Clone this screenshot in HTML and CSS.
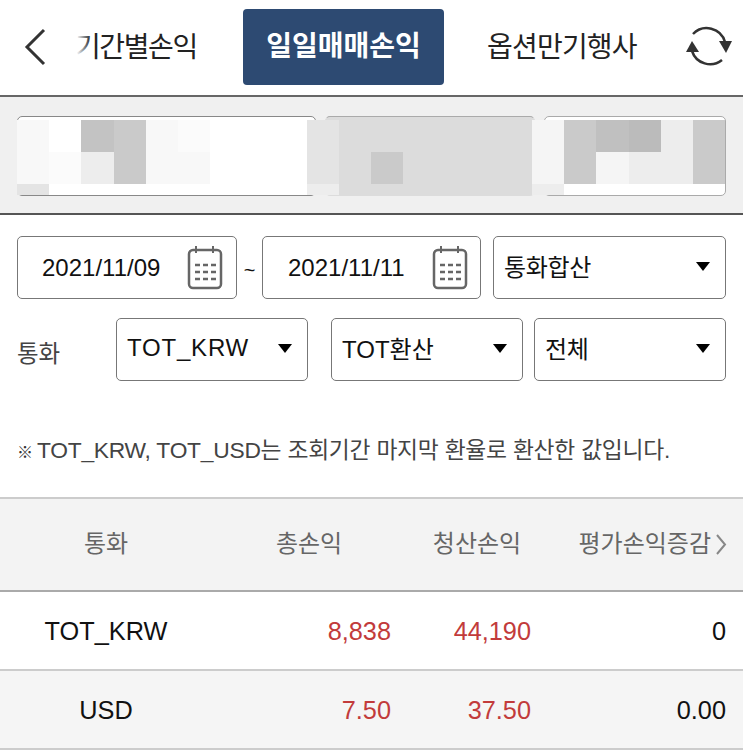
FILE: index.html
```html
<!DOCTYPE html>
<html lang="ko">
<head>
  <meta charset="UTF-8">
  <title>일일매매손익</title>
  <link rel="stylesheet" href="styles.css">
</head>
<body>

  <header class="tabs">
    <svg class="back" width="22" height="38" viewBox="0 0 22 38">
      <path d="M20 2 L3 19 L20 36" fill="none" stroke="#333" stroke-width="3"/>
    </svg>
    <div class="tab tab-first">기간별손익</div>
    <div class="tab tab-active">일일매매손익</div>
    <div class="tab tab-last">옵션만기행사</div>
    <svg class="refresh" width="46" height="44" viewBox="0 0 46 44">
      <path d="M7 9 A19 19 0 0 1 39 17" fill="none" stroke="#333" stroke-width="2.5"/>
      <path d="M33 16 H46 L40 28 Z" fill="#333"/>
      <path d="M36 35 A19 19 0 0 1 6 26" fill="none" stroke="#333" stroke-width="2.5"/>
      <path d="M0 27 H13 L6 16 Z" fill="#333"/>
    </svg>
  </header>

  <section class="strip">
    <div class="cards">
      <div class="card card-a"></div>
      <div class="card card-b"></div>
      <div class="card card-c"></div>
    </div>
    <!-- blurred out account info -->
    <div class="mosaic">
      <i class="s2"></i><i></i><i class="s8"></i><i class="s7"></i><i class="s2"></i><i class="s1"></i><i></i><i></i><i></i><i class="s4"></i><i class="s5"></i><i class="s5"></i><i class="s5"></i><i class="s5"></i><i class="s5"></i><i class="s5"></i><i class="s0"></i><i class="s7"></i><i class="s9"></i><i class="s10"></i><i class="s3"></i><i class="s7"></i>
      <i class="s2"></i><i class="s1"></i><i class="s3"></i><i class="s7"></i><i class="s2"></i><i class="s2"></i><i></i><i></i><i></i><i class="s4"></i><i class="s5"></i><i class="s7"></i><i class="s5"></i><i class="s5"></i><i class="s5"></i><i class="s5"></i><i class="s0"></i><i class="s7"></i><i class="s0"></i><i class="s3"></i><i class="s3"></i><i class="s7"></i>
      <i class="s4"></i><i></i><i></i><i></i><i></i><i></i><i></i><i></i><i></i><i class="s3"></i><i class="s5"></i><i class="s5"></i><i class="s5"></i><i class="s5"></i><i class="s5"></i><i class="s5"></i><i class="s3"></i><i></i><i></i><i></i><i></i><i></i>
    </div>
  </section>

  <section class="filters">
    <div class="filter-row">
      <div class="box date-box">
        <span class="date">2021/11/09</span>
        <svg class="cal" width="36" height="44" viewBox="0 0 36 44">
          <rect x="2" y="4" width="32" height="38" rx="4" fill="none" stroke="#666" stroke-width="2.5"/>
          <path d="M9 0 V7 M26 0 V7" fill="none" stroke="#666" stroke-width="2"/>
          <path d="M8 19 H29 M8 26 H29 M8 33 H29" stroke="#666" stroke-width="2.5" stroke-dasharray="5 3"/>
        </svg>
      </div>
      <span class="tilde">~</span>
      <div class="box date-box date-box-2">
        <span class="date">2021/11/11</span>
        <svg class="cal" width="36" height="44" viewBox="0 0 36 44">
          <rect x="2" y="4" width="32" height="38" rx="4" fill="none" stroke="#666" stroke-width="2.5"/>
          <path d="M9 0 V7 M26 0 V7" fill="none" stroke="#666" stroke-width="2"/>
          <path d="M8 19 H29 M8 26 H29 M8 33 H29" stroke="#666" stroke-width="2.5" stroke-dasharray="5 3"/>
        </svg>
      </div>
      <div class="box select select-sum">통화합산<span class="caret"></span></div>
    </div>
    <div class="filter-row row-2">
      <label class="filter-label">통화</label>
      <div class="box select select-cur">TOT_KRW<span class="caret"></span></div>
      <div class="box select select-conv">TOT환산<span class="caret"></span></div>
      <div class="box select select-all">전체<span class="caret"></span></div>
    </div>
    <p class="note"><span class="note-mark">※</span>TOT_KRW, TOT_USD는 조회기간 마지막 환율로 환산한 값입니다.</p>
  </section>

  <table class="pnl">
    <thead>
      <tr>
        <th class="col-cur">통화</th>
        <th class="col-total">총손익</th>
        <th class="col-real">청산손익</th>
        <th class="col-eval">평가손익증감<svg class="more" width="11" height="21" viewBox="0 0 11 21"><path d="M1 1 L9 10.5 L1 20" fill="none" stroke="#888" stroke-width="2"/></svg></th>
      </tr>
    </thead>
    <tbody>
      <tr>
        <td class="col-cur">TOT_KRW</td>
        <td class="red">8,838</td>
        <td class="red">44,190</td>
        <td>0</td>
      </tr>
      <tr class="alt">
        <td class="col-cur">USD</td>
        <td class="red">7.50</td>
        <td class="red">37.50</td>
        <td>0.00</td>
      </tr>
    </tbody>
  </table>

</body>
</html>
```

FILE: styles.css
```css
* {
  box-sizing: border-box;
}
body {
  margin: 0;
  font-family: "Liberation Sans", "Noto Sans CJK KR", sans-serif;
  color: #111;
  background: #fff;
}

/* top tabs */
.tabs {
  display: flex;
  align-items: center;
  height: 97px;
  padding-bottom: 2px;
  border-bottom: 2px solid #666;
  font-size: 28px;
  color: #222;
}
.back {
  margin-left: 24px;
}
.tab {
  white-space: nowrap;
  letter-spacing: -0.8px;
}
.tab-first {
  position: relative;
  width: 122px;
  margin-left: 29px;
  padding-bottom: 4px;
  letter-spacing: -1.4px;
}
/* first tab is scrolled off, its left edge fades out */
.tab-first::before {
  content: "";
  position: absolute;
  left: -2px;
  top: 0;
  width: 18px;
  height: 100%;
  background: linear-gradient(to right, #fff 20%, rgba(255, 255, 255, 0));
}
.tab-active {
  width: 201px;
  height: 76px;
  margin-left: 46px;
  line-height: 76px;
  letter-spacing: 0;
  text-align: center;
  background: #2d4a72;
  border-radius: 4px;
  color: #fff;
  font-weight: bold;
}
.tab-last {
  width: 150px;
  margin-left: 43px;
  padding-bottom: 4px;
}
.refresh {
  margin-left: 49px;
}

/* blurred cards */
.strip {
  position: relative;
  height: 118px;
  padding: 19px 17px 0;
  background: #f0f0f0;
  border-bottom: 2px solid #555;
}
.cards {
  display: flex;
  gap: 9px;
}
.card {
  height: 80px;
  background: #fff;
  border: 1px solid #888;
  border-radius: 5px;
}
.card-a {
  width: 299px;
}
.card-b {
  width: 210px;
  background: #dcdcdc;
  border-color: #aaa #dcdcdc #dcdcdc;
}
.card-c {
  width: 182px;
  border-color: #aaa;
}
.mosaic {
  position: absolute;
  left: 17px;
  top: 23px;
  display: grid;
  grid-template-columns: repeat(22, 32.2px);
  grid-template-rows: 32px 32px 11px;
}
.mosaic i {
  display: block;
}
.s0 { background: #f5f5f5; }
.s1 { background: #fbfbfb; }
.s2 { background: #f8f8f8; }
.s3 { background: #ededed; }
.s4 { background: #e4e4e4; }
.s5 { background: #dcdcdc; }
.s7 { background: #cacaca; }
.s8 { background: #c3c3c3; }
.s9 { background: #c0c0c0; }
.s10 { background: #bbb; }

/* filters */
.filters {
  padding: 21px 17px 0;
}
.filter-row {
  display: flex;
  align-items: center;
  height: 63px;
}
.row-2 {
  margin-top: 19px;
}
.box {
  display: flex;
  align-items: center;
  height: 63px;
  background: #fff;
  border: 1px solid #777;
  border-radius: 5px;
  font-size: 24px;
}
.date-box {
  width: 220px;
  padding-left: 24px;
}
.date-box-2 {
  width: 219px;
  padding-left: 25px;
}
.date {
  width: 145px;
  white-space: nowrap;
}
.date-box-2 .date {
  width: 144px;
}
.tilde {
  width: 25px;
  padding-top: 6px;
  text-align: center;
  font-size: 20px;
}
.select {
  justify-content: space-between;
  padding: 0 14px 4px 10px;
  letter-spacing: -0.3px;
}
.select-sum {
  width: 233px;
  margin-left: 12px;
}
.select-cur {
  width: 192px;
  margin-left: 55px;
  letter-spacing: 0.8px;
}
.select-conv {
  width: 192px;
  margin-left: 23px;
  letter-spacing: 0;
}
.select-all {
  width: 192px;
  margin-left: 11px;
}
.caret {
  width: 0;
  height: 0;
  margin-top: 2px;
  margin-right: 1px;
  border-left: 7px solid transparent;
  border-right: 7px solid transparent;
  border-top: 9px solid #000;
}
.filter-label {
  width: 44px;
  padding-top: 5px;
  font-size: 23.5px;
  color: #444;
}
.note {
  height: 30px;
  margin: 54px 0 0;
  font-size: 22.8px;
  line-height: 30px;
  letter-spacing: -0.25px;
  color: #444;
  white-space: nowrap;
}
.note-mark {
  display: inline-block;
  width: 20px;
  font-size: 16px;
  line-height: 1;
  letter-spacing: 0;
  color: #333;
}

/* result table */
.pnl {
  width: 743px;
  margin-top: 32px;
  border-collapse: collapse;
  table-layout: fixed;
  font-size: 25.3px;
}
.pnl th {
  height: 93px;
  padding: 0 2px 6px 0;
  background: #f3f3f3;
  border-top: 2px solid #ccc;
  border-bottom: 2px solid #aaa;
  font-size: 24px;
  font-weight: normal;
  color: #666;
  white-space: nowrap;
}
.pnl td {
  height: 79px;
  padding: 2px 17px 0 0;
  border-bottom: 2px solid #ccc;
  text-align: right;
}
.pnl th.col-cur, .pnl td.col-cur {
  width: 212px;
  padding: 2px 0 0;
  text-align: center;
}
.pnl th.col-cur {
  padding: 0 0 6px;
}
.col-total {
  width: 196px;
}
.col-real {
  width: 140px;
}
.pnl th.col-eval {
  padding-right: 16px;
  text-align: right;
}
.more {
  margin-left: 5px;
  vertical-align: -3px;
}
.red {
  color: #c23b3b;
}
.alt td {
  background: #f5f5f5;
}
```
